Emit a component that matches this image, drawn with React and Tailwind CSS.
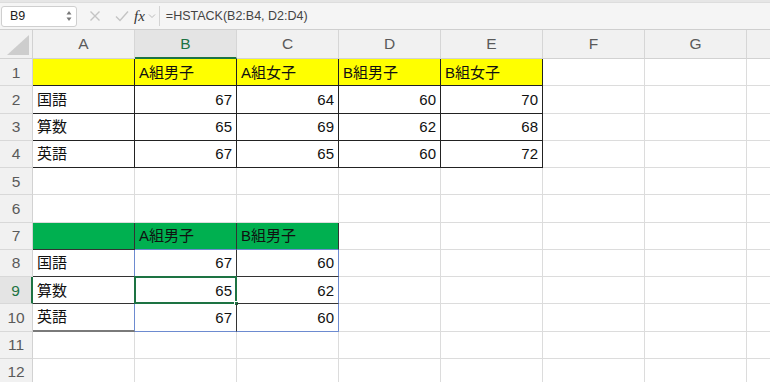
import React from 'react';

const COLS = ['A', 'B', 'C', 'D', 'E', 'F', 'G', 'H'];
const FONT = { fontFamily: '"Liberation Sans", "Noto Sans CJK JP", sans-serif' };

// cell content per row (index 0 = column A)
const ROWS = [
  ['', 'A組男子', 'A組女子', 'B組男子', 'B組女子'],
  ['国語', 67, 64, 60, 70],
  ['算数', 65, 69, 62, 68],
  ['英語', 67, 65, 60, 72],
  [],
  [],
  ['', 'A組男子', 'B組男子'],
  ['国語', 67, 60],
  ['算数', 65, 62],
  ['英語', 67, 60],
  [],
  [],
];

function cellClass(r, c) {
  // r = row number (1-based), c = column index (0 = A)
  let bg = '';
  let br = 'border-r-[#dcdcdc]';
  let bb = 'border-b-[#dcdcdc]';
  if (r >= 1 && r <= 4 && c <= 4) {
    br = 'border-r-[#222]';
    bb = 'border-b-[#222]';
    if (r === 1) bg = 'bg-[#ffff00]';
  }
  if (r >= 7 && r <= 10 && c <= 2) {
    br = 'border-r-[#333]';
    bb = 'border-b-[#333]';
    if (r === 7) bg = 'bg-[#00b050]';
    if (r === 7 && c >= 1) bb = 'border-b-[#6d8bd0]';
    if (r >= 8 && c === 0) br = 'border-r-[#6d8bd0]';
    if (r >= 8 && c === 2) br = 'border-r-[#6d8bd0]';
    if (r === 10 && c >= 1) bb = 'border-b-[#6d8bd0]';
    if (r === 10 && c === 0) bb = 'border-b-2 border-b-[#7a7a7a]';
  }
  return `${bg} ${br} ${bb}`;
}

function Cell({ r, c, value }) {
  const isNum = typeof value === 'number';
  const selected = r === 9 && c === 1;
  return (
    <div
      className={`relative box-border h-full w-[102px] shrink-0 border-r border-b px-1 flex items-center text-[15px] text-[#111] ${
        isNum ? 'justify-end' : 'justify-start'
      } ${cellClass(r, c)}`}
    >
      <span className="leading-none">{value}</span>
      {selected && (
        <>
          <div className="absolute -left-[1px] -top-[1px] -right-[1px] -bottom-[1px] border-2 border-[#1d7343] pointer-events-none" />
          <div className="absolute -right-[3px] -bottom-[3px] w-[5px] h-[5px] bg-[#1d7343] border border-white" />
        </>
      )}
    </div>
  );
}

function FormulaBar() {
  return (
    <div className="h-[30px] bg-[#f5f5f5] border-b border-b-[#cfcfcf] flex flex-col">
      <div className="h-[3px] bg-[#e6e6e6] border-b border-b-[#dddddd]" />
      <div className="flex-1 flex items-center">
        <div className="ml-[1px] w-[76px] h-[21px] bg-white border border-[#cfcfcf] rounded-[3px] flex items-center justify-between pl-2 pr-1">
          <span className="text-[12.5px] text-[#222]">B9</span>
          <svg width="6" height="12" viewBox="0 0 6 12">
            <path d="M3 1 L5.5 4.5 L0.5 4.5 Z" fill="#777" />
            <path d="M3 11 L5.5 7.5 L0.5 7.5 Z" fill="#777" />
          </svg>
        </div>
        <svg className="ml-[12px]" width="12" height="12" viewBox="0 0 12 12">
          <path d="M1.5 1.5 L10.5 10.5 M10.5 1.5 L1.5 10.5" stroke="#c4c4c4" strokeWidth="1.4" />
        </svg>
        <svg className="ml-[14px]" width="14" height="12" viewBox="0 0 14 12">
          <path d="M1 6.5 L5 10.5 L13 1.5" stroke="#c4c4c4" strokeWidth="1.4" fill="none" />
        </svg>
        <span
          className="ml-[5px] text-[15px] italic text-[#333]"
          style={{ fontFamily: '"Liberation Serif", serif' }}
        >
          fx
        </span>
        <svg className="ml-[3px]" width="8" height="6" viewBox="0 0 8 6">
          <path d="M1 1.5 L4 4.5 L7 1.5" stroke="#bbb" strokeWidth="1" fill="none" />
        </svg>
        <div className="ml-[3px] w-px h-[20px] bg-[#d4d4d4]" />
        <span className="ml-[6px] text-[12.5px] text-[#444]">=HSTACK(B2:B4, D2:D4)</span>
      </div>
    </div>
  );
}

function HeaderRow() {
  return (
    <div className="flex h-[29px] bg-[#f1f1f1]">
      <div className="box-border w-[33px] shrink-0 border-r border-b border-[#d2d2d2] flex items-end justify-end p-[3px]">
        <svg width="22" height="20" viewBox="0 0 22 20">
          <path d="M22 0 L22 20 L0 20 Z" fill="#cdcdcd" />
        </svg>
      </div>
      {COLS.map((col) => {
        const sel = col === 'B';
        return (
          <div
            key={col}
            className={`box-border w-[102px] shrink-0 border-r border-r-[#d6d6d6] flex items-center justify-center text-[15.5px] ${
              sel
                ? 'bg-[#e4e4e4] text-[#1d7343] border-b-2 border-b-[#1d7343]'
                : 'text-[#5a5a5a] border-b border-b-[#d2d2d2]'
            }`}
          >
            {/* H is off-screen past the window edge */}
            {col === 'H' ? '' : col}
          </div>
        );
      })}
    </div>
  );
}

export default function App() {
  return (
    <div className="w-[770px] h-[382px] overflow-hidden bg-white" style={FONT}>
      <FormulaBar />
      <HeaderRow />
      {ROWS.map((row, i) => {
        const r = i + 1;
        const sel = r === 9;
        return (
          <div key={r} className="flex h-[27.25px]">
            <div
              className={`box-border w-[33px] shrink-0 border-b border-b-[#d8d8d8] flex items-center justify-center text-[15.5px] ${
                sel
                  ? 'bg-[#e4e4e4] text-[#1d7343] border-r-2 border-r-[#1d7343]'
                  : 'bg-[#f1f1f1] text-[#5a5a5a] border-r border-r-[#d2d2d2]'
              }`}
            >
              {r}
            </div>
            {COLS.map((col, c) => (
              <Cell key={col} r={r} c={c} value={row[c] ?? ''} />
            ))}
          </div>
        );
      })}
    </div>
  );
}
